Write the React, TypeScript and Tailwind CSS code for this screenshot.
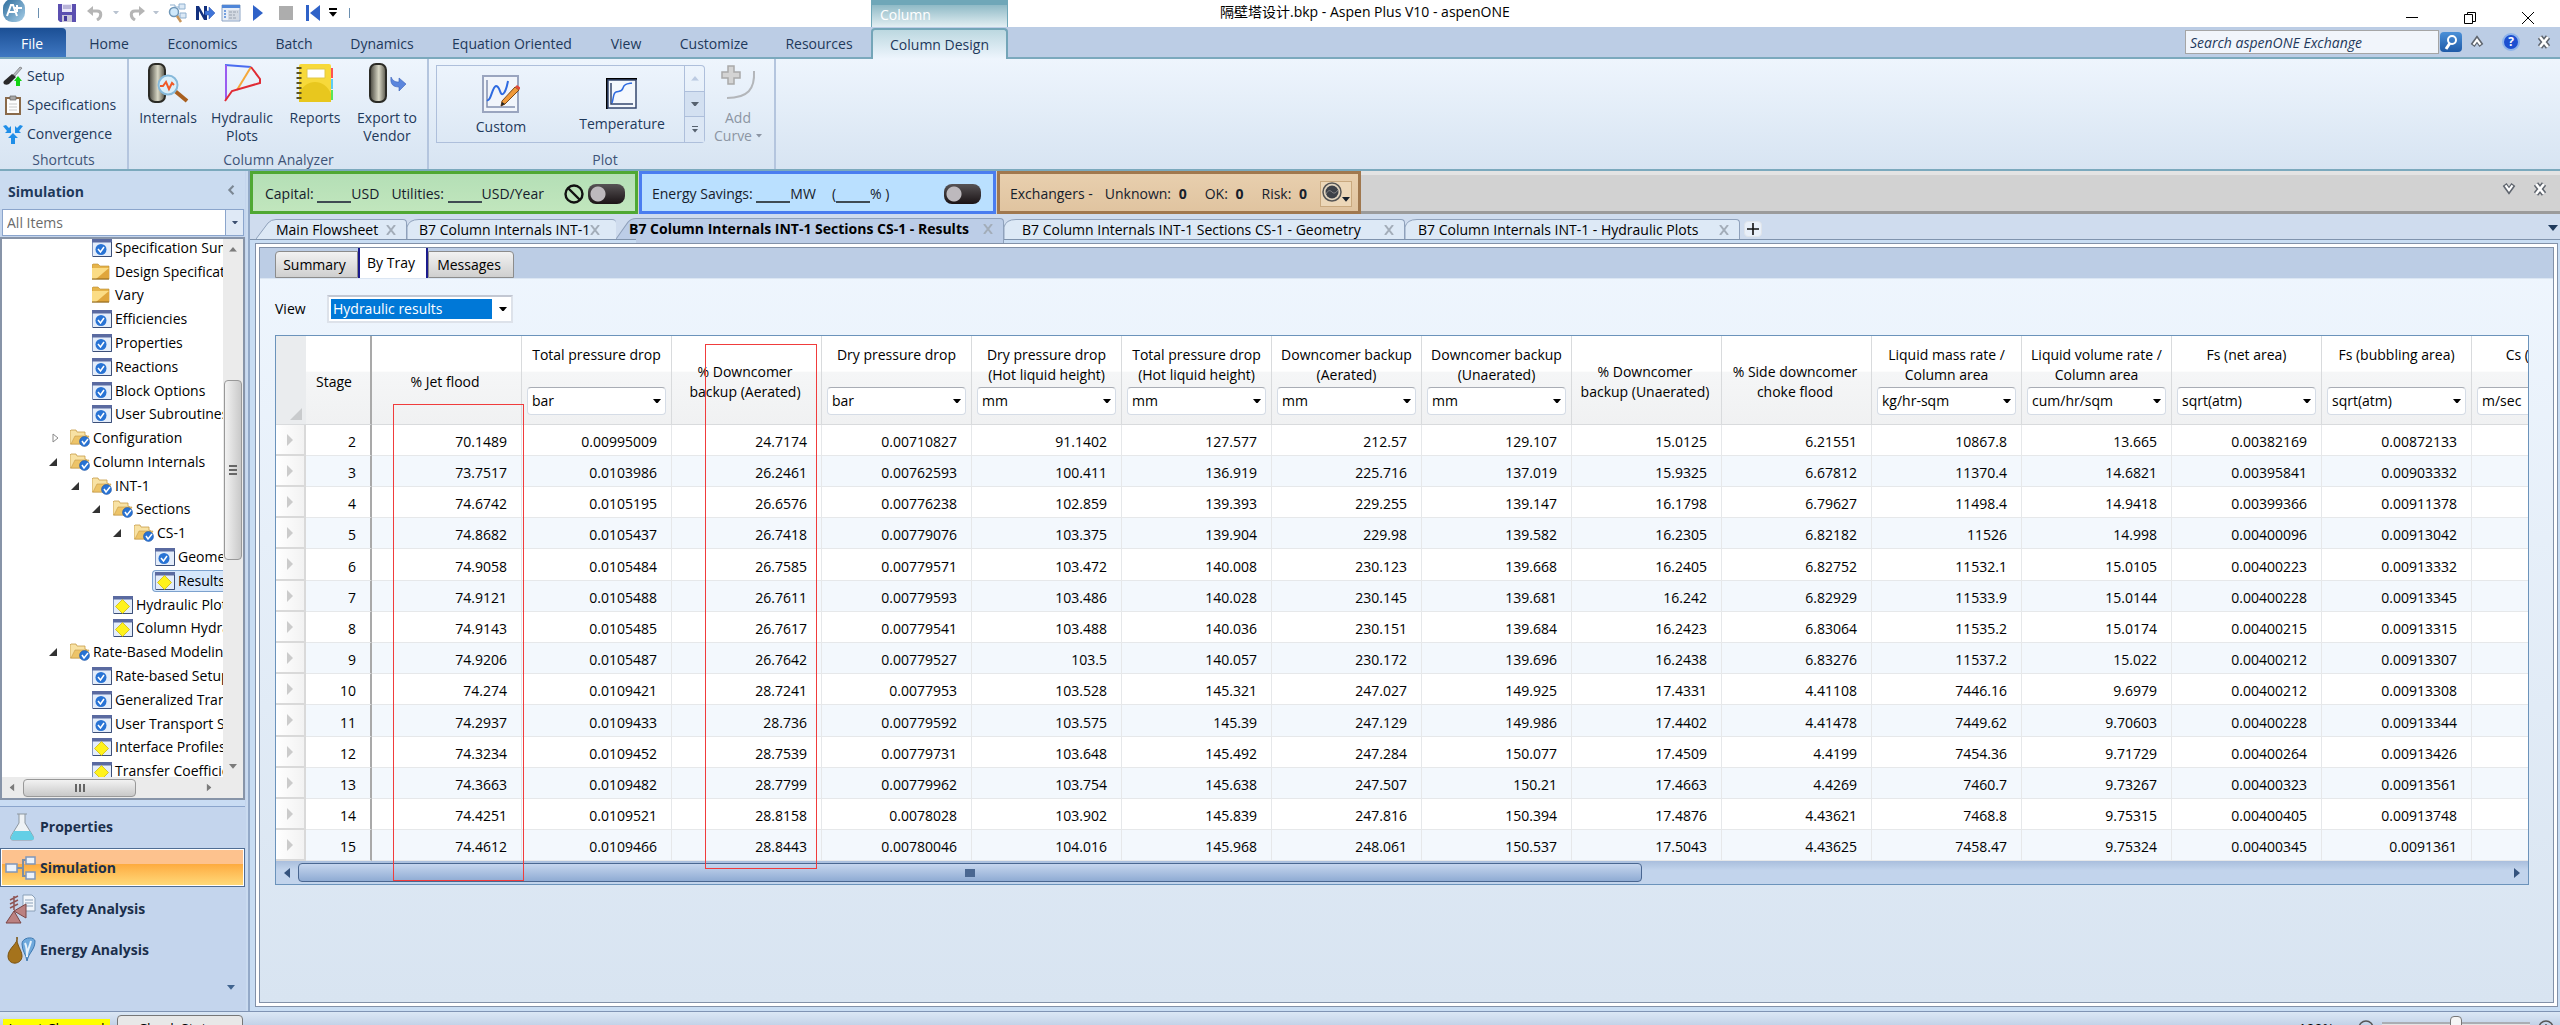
import { FC, ReactNode } from 'react';

type IconProps = { className?: string };

const ribbonTabs = [
  { name: 'Home', width: 'w-[78px]' },
  { name: 'Economics', width: 'w-[109px]' },
  { name: 'Batch', width: 'w-[74px]' },
  { name: 'Dynamics', width: 'w-[102px]' },
  { name: 'Equation Oriented', width: 'w-[158px]' },
  { name: 'View', width: 'w-[70px]' },
  { name: 'Customize', width: 'w-[106px]' },
  { name: 'Resources', width: 'w-[104px]' },
];

type NodeKind = 'form' | 'result' | 'folder' | 'group';

const tree: { name: string; kind: NodeKind; indent: string; state?: 'open' | 'closed'; selected?: boolean }[] = [
  { name: 'Specification Summary', kind: 'form', indent: 'pl-[72px]' },
  { name: 'Design Specifications', kind: 'folder', indent: 'pl-[72px]' },
  { name: 'Vary', kind: 'folder', indent: 'pl-[72px]' },
  { name: 'Efficiencies', kind: 'form', indent: 'pl-[72px]' },
  { name: 'Properties', kind: 'form', indent: 'pl-[72px]' },
  { name: 'Reactions', kind: 'form', indent: 'pl-[72px]' },
  { name: 'Block Options', kind: 'form', indent: 'pl-[72px]' },
  { name: 'User Subroutines', kind: 'form', indent: 'pl-[72px]' },
  { name: 'Configuration', kind: 'group', indent: 'pl-[50px]', state: 'closed' },
  { name: 'Column Internals', kind: 'group', indent: 'pl-[50px]', state: 'open' },
  { name: 'INT-1', kind: 'group', indent: 'pl-[72px]', state: 'open' },
  { name: 'Sections', kind: 'group', indent: 'pl-[93px]', state: 'open' },
  { name: 'CS-1', kind: 'group', indent: 'pl-[114px]', state: 'open' },
  { name: 'Geometry', kind: 'form', indent: 'pl-[135px]' },
  { name: 'Results', kind: 'result', indent: 'pl-[135px]', selected: true },
  { name: 'Hydraulic Plots', kind: 'result', indent: 'pl-[93px]' },
  { name: 'Column Hydraulic Results', kind: 'result', indent: 'pl-[93px]' },
  { name: 'Rate-Based Modeling', kind: 'group', indent: 'pl-[50px]', state: 'open' },
  { name: 'Rate-based Setup', kind: 'form', indent: 'pl-[72px]' },
  { name: 'Generalized Transport', kind: 'form', indent: 'pl-[72px]' },
  { name: 'User Transport Subroutines', kind: 'form', indent: 'pl-[72px]' },
  { name: 'Interface Profiles', kind: 'result', indent: 'pl-[72px]' },
  { name: 'Transfer Coefficients', kind: 'result', indent: 'pl-[72px]' },
];

const columns: { title: string[]; unit?: string }[] = [
  { title: ['% Jet flood'] },
  { title: ['Total pressure drop'], unit: 'bar' },
  { title: ['% Downcomer', 'backup (Aerated)'] },
  { title: ['Dry pressure drop'], unit: 'bar' },
  { title: ['Dry pressure drop', '(Hot liquid height)'], unit: 'mm' },
  { title: ['Total pressure drop', '(Hot liquid height)'], unit: 'mm' },
  { title: ['Downcomer backup', '(Aerated)'], unit: 'mm' },
  { title: ['Downcomer backup', '(Unaerated)'], unit: 'mm' },
  { title: ['% Downcomer', 'backup (Unaerated)'] },
  { title: ['% Side downcomer', 'choke flood'] },
  { title: ['Liquid mass rate /', 'Column area'], unit: 'kg/hr-sqm' },
  { title: ['Liquid volume rate /', 'Column area'], unit: 'cum/hr/sqm' },
  { title: ['Fs (net area)'], unit: 'sqrt(atm)' },
  { title: ['Fs (bubbling area)'], unit: 'sqrt(atm)' },
  { title: ['Cs (net area)'], unit: 'm/sec' },
];

const rows = [
  '2 70.1489 0.00995009 24.7174 0.00710827 91.1402 127.577 212.57 129.107 15.0125 6.21551 10867.8 13.665 0.00382169 0.00872133',
  '3 73.7517 0.0103986 26.2461 0.00762593 100.411 136.919 225.716 137.019 15.9325 6.67812 11370.4 14.6821 0.00395841 0.00903332',
  '4 74.6742 0.0105195 26.6576 0.00776238 102.859 139.393 229.255 139.147 16.1798 6.79627 11498.4 14.9418 0.00399366 0.00911378',
  '5 74.8682 0.0105437 26.7418 0.00779076 103.375 139.904 229.98 139.582 16.2305 6.82182 11526 14.998 0.00400096 0.00913042',
  '6 74.9058 0.0105484 26.7585 0.00779571 103.472 140.008 230.123 139.668 16.2405 6.82752 11532.1 15.0105 0.00400223 0.00913332',
  '7 74.9121 0.0105488 26.7611 0.00779593 103.486 140.028 230.145 139.681 16.242 6.82929 11533.9 15.0144 0.00400228 0.00913345',
  '8 74.9143 0.0105485 26.7617 0.00779541 103.488 140.036 230.151 139.684 16.2423 6.83064 11535.2 15.0174 0.00400215 0.00913315',
  '9 74.9206 0.0105487 26.7642 0.00779527 103.5 140.057 230.172 139.696 16.2438 6.83276 11537.2 15.022 0.00400212 0.00913307',
  '10 74.274 0.0109421 28.7241 0.0077953 103.528 145.321 247.027 149.925 17.4331 4.41108 7446.16 9.6979 0.00400212 0.00913308',
  '11 74.2937 0.0109433 28.736 0.00779592 103.575 145.39 247.129 149.986 17.4402 4.41478 7449.62 9.70603 0.00400228 0.00913344',
  '12 74.3234 0.0109452 28.7539 0.00779731 103.648 145.492 247.284 150.077 17.4509 4.4199 7454.36 9.71729 0.00400264 0.00913426',
  '13 74.3663 0.0109482 28.7799 0.00779962 103.754 145.638 247.507 150.21 17.4663 4.4269 7460.7 9.73267 0.00400323 0.00913561',
  '14 74.4251 0.0109521 28.8158 0.0078028 103.902 145.839 247.816 150.394 17.4876 4.43621 7468.8 9.75315 0.00400405 0.00913748',
  '15 74.4612 0.0109466 28.8443 0.00780046 104.016 145.968 248.061 150.537 17.5043 4.43625 7458.47 9.75324 0.00400345 0.0091361',
].map((line) => line.split(' '));

const Caret: FC<IconProps> = ({ className = 'w-2 text-black' }) => (
  <svg viewBox="0 0 10 6" className={className} fill="currentColor">
    <path d="M0 0h10L5 6z" />
  </svg>
);

const OutlineX: FC<IconProps> = ({ className = 'w-4' }) => (
  <svg viewBox="0 0 16 16" className={className} fill="none" strokeLinejoin="round">
    <path d="M4 3l8 10M12 3L4 13" stroke="#5f656e" strokeWidth="5.5" />
    <path d="M4 3l8 10M12 3L4 13" stroke="#fff" strokeWidth="2.6" />
  </svg>
);

const OutlineChevron: FC<IconProps> = ({ className = 'w-4' }) => (
  <svg viewBox="0 0 16 16" className={className} fill="none">
    <path d="M3 12l5-7 5 7" stroke="#5f656e" strokeWidth="5.5" />
    <path d="M4 11l4-5.5 4 5.5" stroke="#fff" strokeWidth="2.4" />
  </svg>
);

const AspenLogo: FC = () => (
  <svg viewBox="0 0 24 24" className="-mt-1 h-6 w-6">
    <defs>
      <linearGradient id="logo" x1="0" y1="0" x2="1" y2="1">
        <stop offset="0" stopColor="#2d6c9c" />
        <stop offset="1" stopColor="#a8cfe8" />
      </linearGradient>
    </defs>
    <rect x="1" y="0" width="22" height="23" rx="9" fill="url(#logo)" />
    <path d="M5 17l4-11h2l4 11M7 13h6M15 6v7M12 9h8" stroke="#fff" strokeWidth="2" fill="none" />
  </svg>
);

const SaveIcon: FC = () => (
  <svg viewBox="0 0 20 20" className="h-5 w-5">
    <path d="M1 1h18v18H3l-2-2z" fill="#5b4fb0" />
    <path d="M5 1h10v8H5z" fill="#e9e6f8" />
    <path d="M6 3h8M6 5h8" stroke="#8a84b8" />
    <path d="M5 12h10v7H5z" fill="#c9c6d8" />
    <path d="M7 13h3v5H7z" fill="#43389a" />
  </svg>
);

const UndoIcon: FC<IconProps> = ({ className = 'h-4 w-4' }) => (
  <svg viewBox="0 0 16 16" className={className} fill="none">
    <path d="M5 6h5c5 0 5 6 0 9" stroke="#b5b5b5" strokeWidth="3" />
    <path d="M0 6l6-5v10z" fill="#b5b5b5" />
  </svg>
);

const QuickSearchIcon: FC = () => (
  <svg viewBox="0 0 20 20" className="h-5 w-5" fill="none">
    <path d="M12 1h6v5h-6zM13 10h6v5h-6z" fill="#dbe9f6" stroke="#8fb0cf" />
    <path d="M3 2h5v4M8 4h4M11 7v6h2" stroke="#8fb0cf" />
    <circle cx="7" cy="9" r="4.5" fill="#cfe8fa" stroke="#7097b8" strokeWidth="1.5" />
    <path d="M10 13l4 6" stroke="#c8955a" strokeWidth="2.5" />
  </svg>
);

const NextIcon: FC = () => (
  <svg viewBox="0 0 20 18" className="h-[18px] w-5">
    <path d="M1 16V2h3l5 9V2h3v14H9L4 7v9z" fill="#12307e" />
    <path d="M10 7h4V3l6 6-6 6v-4h-4z" fill="#3f74d8" stroke="#2a54b0" strokeWidth=".5" />
  </svg>
);

const PanelIcon: FC = () => (
  <svg viewBox="0 0 20 18" className="h-[18px] w-5">
    <path d="M1 1h18v16H1z" fill="#e8eef7" stroke="#8ba3c4" />
    <path d="M1 1h18v3H1z" fill="#4f86d8" />
    <path d="M3 7h2M3 10h2M3 13h2" stroke="#4f86d8" strokeWidth="1.5" />
    <path d="M7 6h11v10H7z" fill="#d3d9e2" />
    <path d="M8 8h9M8 11h6M8 14h8" stroke="#98a1ae" strokeDasharray="3 1" />
  </svg>
);

const RewindIcon: FC = () => (
  <svg viewBox="0 0 16 16" className="h-4 w-4" fill="#2f62c8">
    <path d="M1 0h3v16H1zM15 0v16L5 8z" />
  </svg>
);

const SetupIcon: FC = () => (
  <svg viewBox="0 0 20 20" className="h-5 w-5">
    <path d="M17 1l2 1-7 8-2-1z" fill="#b8bcc2" stroke="#666" strokeWidth=".6" />
    <path d="M9 8l4 3-7 7c-3 2-7 0-5-3z" fill="#2a2a2a" />
    <path d="M15 10l4 5h-2v5h-4v-5h-2z" fill="#12d312" />
  </svg>
);

const ClipboardIcon: FC = () => (
  <svg viewBox="0 0 18 20" className="h-5 w-5">
    <path d="M2 3h14v16H2z" fill="#fdfdfd" stroke="#8a6a4a" strokeWidth="2" />
    <path d="M6 1h6v4H6z" fill="#a7a7a7" stroke="#666" strokeWidth=".7" />
    <path d="M5 9h8M5 12h8M5 15h8" stroke="#c9c9c9" />
  </svg>
);

const ConvergenceIcon: FC = () => (
  <svg viewBox="0 0 20 20" className="h-5 w-5" fill="#1f8ee8">
    <path d="M0 2l3-1 3 3 2-2v7H2l2-2zM20 2l-3-1-3 3-2-2v7h6l-2-2z" />
    <path d="M10 9l5 5h-3v6H8v-6H5z" />
  </svg>
);

const Vessel: FC = () => (
  <>
    <defs>
      <linearGradient id="vessel">
        <stop offset="0" stopColor="#45443c" />
        <stop offset=".55" stopColor="#d9d8c6" />
        <stop offset="1" stopColor="#55544a" />
      </linearGradient>
    </defs>
    <rect x="2" y="1" width="16" height="38" rx="6" fill="url(#vessel)" stroke="#2b2b26" strokeWidth="2" />
  </>
);

const InternalsIcon: FC = () => (
  <svg viewBox="0 0 42 40" className="h-10 w-[42px]">
    <Vessel />
    <path d="M28 28l12 10" stroke="#a85f1f" strokeWidth="4" />
    <circle cx="21" cy="22" r="9.5" fill="#d9effb" stroke="#86b9da" strokeWidth="2" />
    <path d="M13 23h3l3-4 3 7 3-6 2 2" stroke="#f05a28" strokeWidth="2" fill="none" />
  </svg>
);

const ExportIcon: FC = () => (
  <svg viewBox="0 0 38 40" className="h-10 w-[38px]">
    <Vessel />
    <path d="M23 14c2 4 4 5 8 5v-4l7 6-7 7v-4c-6 0-9-3-8-10z" fill="#5b86dd" stroke="#3b62b8" strokeWidth=".6" />
  </svg>
);

const HydraulicIcon: FC = () => (
  <svg viewBox="0 0 40 40" className="h-10 w-10" fill="none" strokeWidth="2">
    <path d="M3 2l26 2" stroke="#4a6cf0" />
    <path d="M4 2v34" stroke="#9a5cf0" />
    <path d="M29 4L15 27" stroke="#f5a83a" />
    <path d="M29 4l9 12v4L10 28l-7 10" stroke="#e02b35" />
  </svg>
);

const ReportsIcon: FC = () => (
  <svg viewBox="0 0 38 40" className="h-10 w-[38px]">
    <path d="M33 5h4v10h-4z" fill="#ff5252" />
    <path d="M33 16h4v10h-4z" fill="#5ccdf5" />
    <path d="M33 27h4v10h-4z" fill="#59e659" />
    <rect x="3" y="1" width="32" height="38" rx="2" fill="#f7d93a" />
    <path d="M3 31c6-16 26-16 32 0v8H3z" fill="#e8c71e" />
    <path d="M11 6h18v9H11z" fill="#fff" stroke="#e0c84a" />
    <path d="M3 4v34" stroke="#5b5320" strokeWidth="5" strokeDasharray="2 3" />
  </svg>
);

const CustomPlotIcon: FC = () => (
  <svg viewBox="0 0 38 38" className="h-[38px] w-[38px]" fill="none">
    <path d="M1 1h35v36H1z" fill="#f1f5fb" stroke="#9aa5bf" strokeWidth="2" />
    <path d="M5 5v27h28" stroke="#8390b0" strokeWidth="1.5" />
    <path d="M5 25c4 2 5-13 9-14 4 0 4 10 7 8s4-8 5-13" stroke="#2f6be0" strokeWidth="2" />
    <path d="M19 31l1-5L33 12l4 3-14 14z" fill="#f09a3a" stroke="#7a4a1a" />
    <path d="M33 12l2-2 4 3-2 2z" fill="#e04a3a" />
    <path d="M19 31l1-4 3 2z" fill="#222" />
  </svg>
);

const TemperatureIcon: FC = () => (
  <svg viewBox="0 0 32 32" className="h-8 w-8" fill="none">
    <path d="M1 31V1h30" stroke="#000" strokeWidth="2" />
    <path d="M2 2h28v28H2z" fill="#f4f8fd" stroke="#35476e" strokeWidth="1.5" />
    <path d="M5 5v21h22" stroke="#35476e" strokeWidth="1.5" />
    <path d="M6 25c2-6 1-10 4-11s6 0 7-4 4-4 9-5" stroke="#2f6be0" strokeWidth="1.5" />
  </svg>
);

const AddCurveIcon: FC = () => (
  <svg viewBox="0 0 36 36" className="h-9 w-9">
    <path d="M8 1h6v6h6v6h-6v6H8v-6H2V7h6z" fill="#d4d4d4" stroke="#a9a9a9" strokeWidth="1.5" />
    <path d="M34 6c1 18-6 27-27 27" fill="none" stroke="#b3b6ba" strokeWidth="2" />
  </svg>
);

const ForbidIcon: FC = () => (
  <svg viewBox="0 0 20 20" className="h-5 w-5" fill="none" stroke="#111" strokeWidth="2.4">
    <circle cx="10" cy="10" r="8.5" />
    <path d="M4 4l12 12" />
  </svg>
);

const NodeIcon: FC<{ kind: NodeKind }> = ({ kind }) => {
  if (kind === 'folder') {
    return (
      <svg viewBox="0 0 20 18" className="h-[18px] w-5 shrink-0">
        <path d="M0 2l1-1h5l2 2h9v13H0z" fill="#e6b44a" stroke="#b98a2f" strokeWidth=".6" />
        <path d="M0 5h17v11H0z" fill="#fbdc85" />
        <path d="M17 5v11H4z" fill="#e0a63c" />
        <path d="M0 16h17" stroke="#8a6216" />
      </svg>
    );
  }
  if (kind === 'group') {
    return (
      <svg viewBox="0 0 20 18" className="h-[18px] w-5 shrink-0">
        <path d="M0 2l1-1h5l1 2h8v3l2 1-3 8H1L0 15z" fill="#f8e2a4" stroke="#c79c48" strokeWidth=".8" />
        <path d="M5 7h14l-4 8H1z" fill="#edc468" stroke="#c79c48" strokeWidth=".6" />
        <circle cx="14.5" cy="12.500" r="5" fill="#2873d4" stroke="#1a4f9c" strokeWidth=".5" />
        <path d="M12 12l2 3 4-5" stroke="#fff" strokeWidth="1.5" fill="none" />
      </svg>
    );
  }
  return (
    <svg viewBox="0 0 20 18" className="h-[18px] w-5 shrink-0">
      <path d="M.5.5h19v17H.5z" fill="#e4edfa" stroke="#7f93bb" />
      <path d="M0 0h20v3.500H0z" fill="#5a6aa0" />
      <path d="M19.5 3v14.500H1" stroke="#3c4f78" fill="none" />
      {kind === 'form' ? (
        <>
          <circle cx="9" cy="10.5" r="5.5" fill="#2873d4" />
          <path d="M6 10l2.500 3L12 8" stroke="#fff" strokeWidth="1.5" fill="none" />
        </>
      ) : (
        <path d="M9.500 3.500l7 7-7 7-7-7z" fill="#fff21c" stroke="#c9b200" strokeWidth=".7" />
      )}
    </svg>
  );
};

const TitleBar: FC = () => (
  <header className="flex h-[27px] shrink-0 items-start bg-white">
    <div className="flex h-[25px] w-[871px] shrink-0 items-center pl-0.5">
      <AspenLogo />
      <span className="ml-3 h-2.5 w-px bg-[#6b8fb0]" />
      <button aria-label="Save" className="ml-[18px]"><SaveIcon /></button>
      <button aria-label="Undo" className="ml-2.5"><UndoIcon /></button>
      <Caret className="ml-2.5 w-1.5 text-[#b9c3d0]" />
      <button aria-label="Redo" className="ml-2.5"><UndoIcon className="h-4 w-4 -scale-x-100" /></button>
      <Caret className="ml-2 w-1.5 text-[#b9c3d0]" />
      <button aria-label="Find" className="ml-2"><QuickSearchIcon /></button>
      <button aria-label="Next" className="ml-2"><NextIcon /></button>
      <button aria-label="Control panel" className="ml-1.5"><PanelIcon /></button>
      <button aria-label="Run" className="ml-3">
        <svg viewBox="0 0 10 16" className="h-4 w-2.5" fill="#2f62c8"><path d="M0 0l10 8-10 8z" /></svg>
      </button>
      <button aria-label="Stop" className="ml-4 h-3.5 w-3.5 bg-[#adadad]" />
      <button aria-label="Reset" className="ml-3"><RewindIcon /></button>
      <button aria-label="More commands" className="ml-2 flex flex-col items-center gap-0.5">
        <span className="h-0.5 w-2 bg-black" />
        <Caret />
      </button>
      <span className="ml-3 h-2.5 w-px bg-[#6b8fb0]" />
    </div>
    <div className="h-[27px] w-[137px] shrink-0 border-x border-t-[5px] border-[#6fa7b8] bg-linear-to-b from-[#8fbac6] to-[#e3eff3] pl-2 text-sm leading-5 text-white">
      Column
    </div>
    <h1 className="ml-[212px] text-sm leading-6 text-black">隔壁塔设计.bkp - Aspen Plus V10 - aspenONE</h1>
    <div className="ml-auto flex h-[27px] items-end gap-[46px] pr-[26px] pb-[3px]">
      <button aria-label="Minimize" className="mb-1.5 h-px w-3 bg-black" />
      <button aria-label="Restore">
        <svg viewBox="0 0 12 12" className="h-3 w-3" fill="none" stroke="#000"><path d="M.5 2.500h8v9h-8zM3.500 2V.5h8v9H9" /></svg>
      </button>
      <button aria-label="Close">
        <svg viewBox="0 0 12 12" className="h-3 w-3" stroke="#000"><path d="M0 0l12 12M12 0L0 12" /></svg>
      </button>
    </div>
  </header>
);

const RibbonTabs: FC = () => (
  <nav className="flex h-8 shrink-0 items-end border-b-2 border-[#7ba9bd] bg-[#bccde5] text-sm text-[#1e395b]">
    <button className="mr-1 h-[29px] w-[66px] rounded-tr bg-linear-to-b from-[#1b4f95] to-[#3f78c2] pt-0.5 pr-0.5 text-white">File</button>
    {ribbonTabs.map((tab) => (
      <button key={tab.name} className={`h-[29px] pt-0.5 whitespace-nowrap ${tab.width}`}>{tab.name}</button>
    ))}
    <button className="-mb-0.5 h-[31px] w-[137px] rounded-t border-2 border-b-0 border-[#73a5b8] bg-linear-to-b from-[#bcd8e0] to-[#eef5fd]">
      Column Design
    </button>
    <div className="ml-auto flex items-center self-center pr-2">
      <input
        aria-label="Search aspenONE Exchange"
        placeholder="Search aspenONE Exchange"
        className="h-6 w-[254px] border border-[#a5a5a5] bg-[#f1f5fb] px-1 italic placeholder:text-[#1e395b]"
      />
      <button aria-label="Search" className="ml-px flex h-5 w-[22px] items-center justify-center rounded-sm bg-linear-to-b from-[#4b90d8] to-[#1f5ba8]">
        <svg viewBox="0 0 16 16" className="h-4 w-4" fill="none" stroke="#fff" strokeWidth="2"><circle cx="9" cy="6" r="4" /><path d="M7 9l-4 6" strokeWidth="3" /></svg>
      </button>
      <button aria-label="Collapse ribbon" className="ml-2"><OutlineChevron className="w-3.5" /></button>
      <button aria-label="Help" className="ml-[18px] flex h-[18px] w-[18px] items-center justify-center rounded-full border-2 border-[#8fb4ea] bg-[#1d4fd0] text-xs font-bold text-white">?</button>
      <button aria-label="Close document" className="ml-4"><OutlineX /></button>
    </div>
  </nav>
);

const RibbonGroup: FC<{ title: string; className: string; children: ReactNode }> = ({ title, className, children }) => (
  <section className={`flex shrink-0 flex-col border-r-2 border-[#b4c5de] ${className}`}>
    <div className="flex min-h-0 flex-1">{children}</div>
    <h2 className="h-5 text-center text-sm leading-[22px] text-[#3e5478]">{title}</h2>
  </section>
);

const BigButton: FC<{ label: string[]; className: string; icon: ReactNode }> = ({ label, className, icon }) => (
  <button className={`flex flex-col items-center pt-1 ${className}`}>
    {icon}
    <span className="mt-1.5 leading-[18px] whitespace-nowrap">
      {label.map((line) => (
        <span key={line} className="block">{line}</span>
      ))}
    </span>
  </button>
);

const Ribbon: FC = () => (
  <div className="flex h-28 shrink-0 border-b-2 border-[#7ba9bd] bg-linear-to-b from-[#eef5fd] to-[#d7e4f2] text-sm text-[#1e395b]">
    <RibbonGroup title="Shortcuts" className="w-[129px]">
      <div className="flex flex-col gap-[9px] pt-[7px] pl-[3px]">
        <button className="flex items-center gap-1"><SetupIcon />Setup</button>
        <button className="flex items-center gap-1"><ClipboardIcon />Specifications</button>
        <button className="flex items-center gap-1"><ConvergenceIcon />Convergence</button>
      </div>
    </RibbonGroup>
    <RibbonGroup title="Column Analyzer" className="w-[300px] pl-px">
      <BigButton label={['Internals']} className="w-[76px]" icon={<InternalsIcon />} />
      <BigButton label={['Hydraulic', 'Plots']} className="w-[72px]" icon={<HydraulicIcon />} />
      <BigButton label={['Reports']} className="w-[74px]" icon={<ReportsIcon />} />
      <BigButton label={['Export to', 'Vendor']} className="w-[70px]" icon={<ExportIcon />} />
    </RibbonGroup>
    <RibbonGroup title="Plot" className="w-[347px] pl-[7px]">
      <div className="mt-1.5 flex h-[78px] w-[249px] border border-[#aebfdb]">
        <button className="flex w-[128px] flex-col items-center pt-[9px]">
          <CustomPlotIcon />
          <span className="mt-1">Custom</span>
        </button>
        <button className="flex w-[114px] flex-col items-center pt-3">
          <TemperatureIcon />
          <span className="mt-1">Temperature</span>
        </button>
      </div>
      <div className="mt-1.5 flex h-[78px] w-5 flex-col divide-y divide-[#aebfdb] rounded-r border border-l-0 border-[#aebfdb]">
        <button aria-label="Scroll up" className="flex flex-1 items-center justify-center"><Caret className="w-2 rotate-180 text-[#bccbe2]" /></button>
        <button aria-label="Scroll down" className="flex flex-1 items-center justify-center bg-[#d3e0f1]"><Caret className="w-2 text-[#56616f]" /></button>
        <button aria-label="More plots" className="flex flex-1 flex-col items-center justify-center gap-0.5 bg-[#dce7f5]">
          <span className="h-px w-1.5 bg-[#56616f]" />
          <Caret className="w-1.5 text-[#56616f]" />
        </button>
      </div>
      <button className="flex w-[66px] flex-col items-center pt-1.5 text-[#8c95a3]">
        <AddCurveIcon />
        <span className="mt-2 leading-[18px]">Add</span>
        <span className="flex items-center gap-1 leading-[18px]">Curve <Caret className="w-1.5" /></span>
      </button>
    </RibbonGroup>
  </div>
);

const TreeArrow: FC<{ state?: 'open' | 'closed' }> = ({ state }) => (
  <svg viewBox="0 0 10 10" className={`mr-3 -ml-[22px] h-2.5 w-2.5 shrink-0 ${state === 'closed' ? 'translate-x-0.5' : ''}`}>
    {state === 'open' ? <path d="M9 1v8H1z" fill="#333" /> : <path d="M3 1l5 4-5 4z" fill="#fff" stroke="#8a8a8a" />}
  </svg>
);

const areas = [
  {
    name: 'Properties',
    icon: (
      <>
        <path d="M12 2h10M14 2v9L6 24c-1 3 0 4 2 4h18c2 0 3-1 2-4l-8-13V2" fill="#eef2f5" stroke="#8d979f" />
        <path d="M9 19h16l4 7c0 2-1 2-3 2H8c-2 0-3-1-2-3z" fill="#63cfe6" />
      </>
    ),
  },
  {
    name: 'Simulation',
    icon: (
      <>
        <path d="M12 15h6M26 7h-8v16h8" fill="none" stroke="#7d8ea3" strokeWidth="2" />
        <path d="M1 11h11v8H1zM21 4h9v7h-9zM21 19h9v7h-9z" fill="#edf3fb" stroke="#7f96bb" strokeWidth="1.5" />
      </>
    ),
  },
  {
    name: 'Safety Analysis',
    icon: (
      <>
        <path d="M18 1h9l3 3v13H18z" fill="#f2f6fb" stroke="#8aa0b8" />
        <path d="M20 6h8M20 9h8M20 12h8" stroke="#8aa0b8" />
        <path d="M1 29l8-12 7 12zM9 17l12-7v14z" fill="#bb8181" stroke="#7a4545" />
        <path d="M9 16V2M5 6l8-4M5 10l8-4M5 14l8-4" stroke="#8f5454" strokeWidth="1.5" />
      </>
    ),
  },
  {
    name: 'Energy Analysis',
    icon: (
      <>
        <path d="M12 2c2 6-9 11-9 19 0 10 14 9 14 0 0-6-6-11-5-19z" fill="#a5731c" stroke="#7a5210" />
        <path d="M17 9c0-7 12-8 13-3 0 9-6 11-8 20-1-7-5-10-5-17z" fill="#6fa9dc" stroke="#3c78b0" />
        <path d="M20 8c2 4 2 8 2 14M26 6c-1 5-3 8-4 13" stroke="#e4f1fb" fill="none" strokeWidth="2" />
      </>
    ),
  },
];

const Sidebar: FC = () => (
  <aside className="flex w-[246px] shrink-0 flex-col bg-[#c4d5ed] pr-px">
    <div className="flex h-[38px] shrink-0 items-center justify-between bg-[#cadbf0] pt-1 pr-2.5 pl-2">
      <h2 className="text-sm font-bold text-[#1e395b]">Simulation</h2>
      <button aria-label="Collapse pane">
        <svg viewBox="0 0 8 12" className="mb-1 h-2.5 w-2" fill="none" stroke="#7b8794" strokeWidth="2.5"><path d="M7 1L2 6l5 5" /></svg>
      </button>
    </div>
    <div className="mr-px ml-0.5 flex h-[27px] shrink-0 border border-[#8ba5cc] bg-white">
      <input aria-label="Filter items" placeholder="All Items" className="min-w-0 flex-1 px-1 text-sm placeholder:text-[#6b6b6b]" />
      <button aria-label="Show filters" className="flex w-[18px] items-center justify-center border-l border-[#8ba5cc] bg-[#dfe9f6]"><Caret className="w-1.5 text-[#3c4f70]" /></button>
    </div>
    <div className="mt-px flex min-h-0 flex-1 flex-col border-2 border-[#8794a8] bg-white">
      <div className="flex min-h-0 flex-1">
        <ul className="-mt-[3px] flex h-[547px] min-w-0 flex-1 flex-col overflow-hidden pl-[18px] text-sm text-black">
          {tree.map((node) => (
            <li key={node.name} className={`flex min-h-0 flex-1 items-center ${node.indent}`}>
              {node.state && <TreeArrow state={node.state} />}
              <span
                className={`flex min-w-0 flex-1 items-center gap-[3px] overflow-hidden whitespace-nowrap ${
                  node.selected ? '-ml-[3px] rounded-l border border-r-0 border-[#7da2ce] bg-[#d6e7fb] pl-0.5' : ''
                }`}
              >
                <NodeIcon kind={node.kind} />
                {node.name}
              </span>
            </li>
          ))}
        </ul>
        <div className="flex w-5 shrink-0 flex-col items-center bg-[#ebebeb] py-2">
          <Caret className="w-2 rotate-180 text-[#7b7b7b]" />
          <div className="mt-[128px] flex h-[180px] w-[18px] flex-col items-center justify-center gap-0.5 rounded-sm border border-[#989898] bg-linear-to-r from-[#f2f2f2] to-[#c9c9c9]">
            <span className="h-0.5 w-2 bg-[#666]" />
            <span className="h-0.5 w-2 bg-[#666]" />
            <span className="h-0.5 w-2 bg-[#666]" />
          </div>
          <Caret className="mt-auto w-2 text-[#7b7b7b]" />
        </div>
      </div>
      <div className="flex h-[21px] shrink-0 items-center bg-[#ebebeb] pr-[30px] pl-1.5">
        <Caret className="w-2 rotate-90 text-[#7b7b7b]" />
        <div className="ml-[7px] flex h-[18px] w-[113px] items-center justify-center gap-0.5 rounded-sm border border-[#989898] bg-linear-to-b from-[#f2f2f2] to-[#c9c9c9]">
          <span className="h-2 w-0.5 bg-[#666]" />
          <span className="h-2 w-0.5 bg-[#666]" />
          <span className="h-2 w-0.5 bg-[#666]" />
        </div>
        <Caret className="ml-auto w-2 -rotate-90 text-[#7b7b7b]" />
      </div>
    </div>
    <div className="h-[7px] shrink-0 border-b border-[#8ba5cc] bg-[#c9dcf3]" />
    <div className="flex shrink-0 flex-col text-sm font-bold text-[#1b2f4b]">
      {areas.map((area) => (
        <button
          key={area.name}
          className={`mb-0.5 flex h-[39px] items-center gap-[3px] border pl-1 ${area.name === 'Simulation' ? 'border-[#4f6d94] bg-linear-to-b from-[#fdc28e] from-40% via-[#fdab3f] via-41% to-[#ffdb7a] ring-1 ring-white ring-inset' : 'border-transparent'}`}
        >
          <svg viewBox="0 0 32 30" className="h-[30px] w-8 shrink-0">{area.icon}</svg>
          {area.name}
        </button>
      ))}
    </div>
    <div className="flex h-10 shrink-0 items-start justify-end pt-3.5 pr-2.5">
      <Caret className="w-2 text-[#41648f]" />
    </div>
  </aside>
);

const Switch: FC<{ label: string }> = ({ label }) => (
  <input
    type="checkbox"
    role="switch"
    aria-label={label}
    className="h-5 w-[37px] appearance-none rounded-lg bg-[radial-gradient(circle_at_10px_10px,#bdb9bd_7px,transparent_8px),linear-gradient(#575355,#1a1315)]"
  />
);

const Blank: FC = () => <span className="inline-block h-4 w-[34px] border-b-2 border-[#3f4a52] align-middle" />;

const Indicators: FC = () => (
  <div className="flex h-[43px] shrink-0 bg-[#d2d2d2] text-sm whitespace-nowrap text-[#16202b]">
    <div className="flex w-[388px] shrink-0 items-center border-3 border-[#4fa833] bg-linear-to-b from-[#b4dfb6] to-[#c1e6bd] pt-0.5 pl-3">
      <span>Capital: <Blank />USD</span>
      <span className="ml-3">Utilities: <Blank />USD/Year</span>
      <span className="ml-auto flex gap-1 pr-2.5"><ForbidIcon /><Switch label="Show economics" /></span>
    </div>
    <div className="ml-px flex w-[357px] shrink-0 items-center border-3 border-[#4a7df0] bg-[#bae0ff] pt-0.5 pl-2.5">
      <span>Energy Savings: <Blank />MW</span>
      <span className="ml-4">(<Blank />% )</span>
      <span className="ml-auto flex pr-3"><Switch label="Show energy savings" /></span>
    </div>
    <div className="ml-px flex w-[364px] shrink-0 items-center border-3 border-[#a0784f] bg-linear-to-b from-[#e8cfae] to-[#e0c4a0] pt-0.5 pl-2.5">
      <span>Exchangers -</span>
      <span className="ml-3">Unknown: <b className="ml-1">0</b></span>
      <span className="ml-[18px]">OK: <b className="ml-1">0</b></span>
      <span className="ml-[18px]">Risk: <b className="ml-1">0</b></span>
      <button aria-label="Exchanger options" className="mr-1.5 ml-auto flex h-[26px] w-8 items-end border border-[#c9a97f] bg-[#ecd7b8] pb-1 pl-px">
        <svg viewBox="0 0 20 20" className="h-5 w-5"><circle cx="10" cy="10" r="9" fill="#e3d6c0" stroke="#555" strokeWidth="1.5" /><circle cx="10" cy="10" r="6.5" fill="#3d4148" /><path d="M4 12c2-4 4-4 6-2s4 1 6-2" stroke="#8a8a8a" fill="none" /></svg>
        <Caret className="w-2" />
      </button>
    </div>
    <div className="flex flex-1 items-start justify-end gap-4 border-t-4 border-b-3 border-t-[#e3e3e3] border-b-[#9b9b9b] pt-1.5 pr-3">
      <button aria-label="Minimize indicators"><OutlineChevron className="w-3.5 rotate-180" /></button>
      <button aria-label="Close indicators"><OutlineX /></button>
    </div>
  </div>
);

const docTabs = [
  { name: 'Main Flowsheet', width: 'w-[151px]' },
  { name: 'B7 Column Internals INT-1', width: 'w-[209px]', inset: '-ml-2' },
  { name: 'B7 Column Internals INT-1 Sections CS-1 - Results', width: 'w-[388px]', inset: '-ml-[7px]', active: true },
  { name: 'B7 Column Internals INT-1 Sections CS-1 - Geometry', width: 'w-[401px]', inset: '-ml-0.5' },
  { name: 'B7 Column Internals INT-1 - Hydraulic Plots', width: 'w-[335px]', inset: '-ml-[7px]' },
];

const DocTabs: FC = () => (
  <div className="flex h-[26px] shrink-0 items-end border-b border-[#7f93ad] bg-[#cfdcee] pl-1.5 text-sm text-black">
    {docTabs.map((tab, i) => (
      <div key={tab.name} className={`flex shrink-0 ${tab.active ? '-mb-1 h-[25px] pb-1' : 'h-5'} ${tab.width}`}>
        <svg viewBox="0 0 20 20" preserveAspectRatio="none" className="h-full w-5 shrink-0">
          <path
            d={i === 0 || tab.active ? 'M0 20L12 4Q15 .5 20 .5V20z' : 'M0 20V8Q2 .5 12 .5H20V20z'}
            fill={tab.active ? '#bccde7' : '#dde9f6'}
          />
          <path d={i === 0 || tab.active ? 'M0 20L12 4Q15 .5 20 .5' : 'M0 20V8Q2 .5 12 .5H20'} fill="none" stroke="#8fa1bb" />
        </svg>
        <div
          className={`flex flex-1 items-center justify-between rounded-tr border-t border-[#8fa1bb] ${i === 1 ? 'pr-4' : 'border-r pr-2.5'} ${
            tab.active ? '-mb-1 bg-[#bccde7] pb-1 font-bold' : 'bg-[#dde9f6]'
          }`}
        >
          <a href="#doc" className={`whitespace-nowrap ${tab.inset ?? ''}`}>{tab.name}</a>
          <button aria-label={`Close ${tab.name}`}>
            <svg viewBox="0 0 10 10" className="h-2.5 w-2.5" stroke="#a3adb9" strokeWidth="2"><path d="M1 0l8 10M9 0L1 10" /></svg>
          </button>
        </div>
      </div>
    ))}
    <button aria-label="New tab" className="mb-0.5 ml-1 flex h-4 w-[18px] items-center justify-center rounded-sm border border-[#dfe4ea] bg-[#e9f0f9]">
      <svg viewBox="0 0 14 14" className="h-3.5 w-3.5 shrink-0" stroke="#111" strokeWidth="1.600"><path d="M7 1v12M1 7h12" /></svg>
    </button>
    <button aria-label="List tabs" className="mb-2 ml-auto"><Caret className="mr-0.5 w-2.5 text-[#1e395b]" /></button>
  </div>
);

const ResultsTable: FC = () => (
  <div className="border border-[#6b93bb] bg-white text-black">
    <div className="overflow-hidden">
      <table className="w-[2345px] table-fixed border-separate border-spacing-0 text-sm">
        <colgroup>
          <col className="w-[30px]" />
          <col className="w-[66px]" />
          <col className="w-[150px]" />
          {columns.slice(1).map((column, i) => (
            <col key={i} className="w-[150px]" />
          ))}
        </colgroup>
        <thead>
          <tr className="h-[89px]">
            <th className="border-b border-[#d9dbdd] bg-[#eaecee] p-1 align-bottom">
              <svg viewBox="0 0 12 12" className="ml-auto h-3 w-3"><path d="M12 0v12H0z" fill="#c9cbcd" /></svg>
            </th>
            <th className="border-r-2 border-b border-r-[#a9a9a9] border-b-[#d9dbdd] bg-linear-to-b from-white from-40% via-[#f5f6f7] via-41% to-[#f0f1f2] pt-1 pr-2 font-normal">Stage</th>
            {columns.map((column, i) => (
              <th
                key={i}
                className={`border-r border-b border-[#d9dbdd] bg-linear-to-b from-white from-40% via-[#f5f6f7] via-41% to-[#f0f1f2] px-[5px] font-normal ${column.unit ? 'pt-[9px] align-top' : 'pt-1 pr-2 align-middle'}`}
              >
                <div className={column.unit ? 'h-[42px] leading-5' : 'leading-5'}>
                  {column.title.map((line) => (
                    <div key={line} className="whitespace-nowrap">{line}</div>
                  ))}
                </div>
                {column.unit && (
                  <label className="flex h-7 items-center rounded-sm border border-[#d5dce6] border-t-[#a9adb5] bg-white pr-1">
                    <select aria-label={`${column.title.join(' ')} unit`} className="h-full min-w-0 flex-1 appearance-none pl-1">
                      <option>{column.unit}</option>
                    </select>
                    <Caret />
                  </label>
                )}
              </th>
            ))}
          </tr>
        </thead>
        <tbody>
          {rows.map(([stage, ...values]) => (
            <tr key={stage} className="h-[31px] even:bg-[#f3f8fd] nth-[5n]:h-8">
              <td className="border-r-2 border-b-2 border-[#d9d9d9] bg-linear-to-r from-white to-[#f2f2f2]">
                <svg viewBox="0 0 6 12" className="ml-[11px] h-3 w-1.5"><path d="M0 0l6 6-6 6z" fill="#cbcbcb" /></svg>
              </td>
              <td className="border-r-2 border-b border-r-[#a9a9a9] border-b-[#e6e8ea] pt-1 pr-3.5 text-right">{stage}</td>
              {values.map((value, i) => (
                <td key={i} className="border-r border-b border-[#e6e8ea] pt-1 pr-3.5 text-right">{value}</td>
              ))}
              <td className="border-b border-[#e6e8ea]" />
            </tr>
          ))}
        </tbody>
      </table>
    </div>
    <div className="flex h-[23px] items-center bg-linear-to-b from-[#a9bedd] to-[#c2d4ec] to-40% px-1.5">
      <Caret className="w-2.5 rotate-90 text-[#35537d]" />
      <div className="ml-1.5 flex h-[19px] w-[60%] items-center justify-center rounded-sm border border-[#4a6791] bg-linear-to-b from-[#c6d6ee] to-[#8fabd3]">
        <span className="h-2 w-2.5 bg-[#4a6791]" />
      </div>
      <Caret className="ml-auto w-2.5 -rotate-90 text-[#35537d]" />
    </div>
  </div>
);

const Workspace: FC = () => (
  <main className="flex min-w-0 flex-1 flex-col border-l-2 border-[#93a9c8] bg-[#c9ddf3]">
    <Indicators />
    <DocTabs />
    <div className="mt-[3px] mr-0.5 mb-1 ml-[5px] flex min-h-0 flex-1 flex-col border border-[#8291a8] bg-white p-[3px]">
      <div className="flex min-h-0 flex-1 flex-col border border-[#8291a8] bg-linear-to-b from-[#eff6fe] to-[#d8e4f1]">
        <div className="flex h-[31px] shrink-0 items-end border-b border-[#dbe6f3] bg-[#bccde5] pl-[15px] text-sm text-black">
          <button className="h-[27px] w-[83px] rounded-tl border border-[#8c8c8c] bg-linear-to-b from-[#f2f2f2] to-[#cfcfcf] pr-1">Summary</button>
          <button className="h-[30px] w-[70px] border-x-2 border-[#1a1a8c] bg-white pr-1">By Tray</button>
          <button className="h-[27px] w-[86px] rounded-tr border border-[#8c8c8c] bg-linear-to-b from-[#f2f2f2] to-[#cfcfcf] pr-1">Messages</button>
        </div>
        <div className="relative pt-4 pr-6 pl-[15px]">
          <div className="mb-3 flex items-center text-sm text-black">
            <label htmlFor="view" className="w-[52px]">View</label>
            <div className="flex h-7 w-[186px] items-center justify-between border-2 border-[#dde2ea] border-t-[#c2c7d2] bg-white pr-1 pl-0.5">
              <select id="view" className="h-5 w-[161px] appearance-none bg-[#0078d7] pl-0.5 leading-5 text-white">
                <option>Hydraulic results</option>
              </select>
              <Caret />
            </div>
          </div>
          <ResultsTable />
          <div className="pointer-events-none absolute top-[125px] left-[133px] h-[477px] w-[131px] border border-[#f03c3c]" />
          <div className="pointer-events-none absolute top-[65px] left-[445px] h-[525px] w-[112px] border border-[#f03c3c]" />
        </div>
      </div>
    </div>
  </main>
);

const StatusBar: FC = () => (
  <footer className="flex h-3.5 shrink-0 items-start overflow-hidden border-t border-[#7f93b3] bg-linear-to-b from-[#dbe7f5] to-[#c3d3e8] text-sm text-black">
    <span className="mt-[7px] ml-[3px] w-[107px] bg-[#ffff00] text-center whitespace-nowrap">Input Changed</span>
    <button className="mt-[3px] ml-[7px] h-6 w-[126px] rounded-sm border border-[#777] bg-[#e8e8e8] pt-1 leading-4">Check Status</button>
    <div className="ml-auto flex items-start">
      <span className="mt-[7px] mr-6">100%</span>
      <button aria-label="Zoom out">
        <svg viewBox="0 0 16 16" className="mt-2 h-4 w-4" fill="none" stroke="#555" strokeWidth="1.5"><circle cx="8" cy="8" r="7" /><path d="M4 8h8" /></svg>
      </button>
      <input
        type="range"
        aria-label="Zoom"
        className="mx-2 mt-[3px] h-5 w-[148px] appearance-none bg-transparent [&::-webkit-slider-runnable-track]:h-1.5 [&::-webkit-slider-runnable-track]:border-t-2 [&::-webkit-slider-runnable-track]:border-[#a9adb3] [&::-webkit-slider-runnable-track]:bg-[#e4e4e4] [&::-webkit-slider-thumb]:-mt-2 [&::-webkit-slider-thumb]:h-5 [&::-webkit-slider-thumb]:w-3 [&::-webkit-slider-thumb]:appearance-none [&::-webkit-slider-thumb]:rounded-sm [&::-webkit-slider-thumb]:border [&::-webkit-slider-thumb]:border-[#777] [&::-webkit-slider-thumb]:bg-[#f5f5f5]"
      />
      <button aria-label="Zoom in">
        <svg viewBox="0 0 16 16" className="mt-2 mr-1.5 h-4 w-4" fill="none" stroke="#555" strokeWidth="1.5"><circle cx="8" cy="8" r="7" /><path d="M4 8h8M8 4v8" /></svg>
      </button>
    </div>
  </footer>
);

const App: FC = () => (
  <div className="flex h-screen min-h-[700px] flex-col overflow-hidden bg-[#cadbf0] font-['Open_Sans','Noto_Sans_CJK_SC',sans-serif]">
    <TitleBar />
    <RibbonTabs />
    <Ribbon />
    <div className="flex min-h-0 flex-1 gap-0.5">
      <Sidebar />
      <Workspace />
    </div>
    <StatusBar />
  </div>
);

export default App;
